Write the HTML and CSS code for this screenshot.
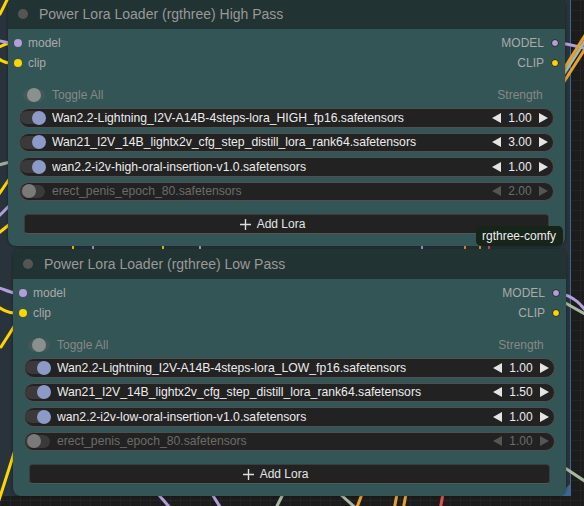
FILE: index.html
```html
<!DOCTYPE html>
<html>
<head>
<meta charset="utf-8">
<link rel="stylesheet" href="styles.css">
</head>
<body>
<div class="canvas">
  <div class="group"></div>
  <svg class="wires" width="584" height="506" viewBox="0 0 584 506">
    <g fill="none" stroke-width="3" stroke-linecap="round">
      <path d="M0 14 L7 0" stroke="#ffd500"/>
      <path d="M-5 50 C 0 46, 4 44, 10 43" stroke="#ffd500"/>
      <path d="M-5 40 L10 43" stroke="#b39ddb"/>
      <path d="M-5 56 C 0 60, 4 63, 10 63" stroke="#ffd500"/>
      <path d="M-5 166 L10 162" stroke="#9fae9c"/>
      <path d="M-5 200 L10 178" stroke="#ffd500"/>
      <path d="M-5 220 L10 205" stroke="#b39ddb"/>
      <path d="M-5 236 L10 224" stroke="#ffd500"/>
      <path d="M-5 287 C 2 288, 8 292, 15 293" stroke="#b39ddb"/>
      <path d="M-5 305 C 3 310, 8 313, 15 313" stroke="#ffd500"/>
      <path d="M1 347 L15 325" stroke="#ffd500"/>
      <path d="M-1 500 L15 450" stroke="#ffd500"/>
      <path d="M558 43 C 570 44, 578 47, 592 50" stroke="#b39ddb"/>
      <path d="M562 72 L592 24" stroke="#e8a030"/>
      <path d="M560 80 L592 30" stroke="#a8b8a0"/>
      <path d="M560 88 L592 38" stroke="#e8a030"/>
      <path d="M558 293 C 574 296, 582 304, 592 320" stroke="#b39ddb"/>
      <path d="M560 300 L592 318" stroke="#a8b8a0"/>
      <path d="M562 466 L592 486" stroke="#a8b8a0"/>
      <path d="M158 494 L172 510" stroke="#b39ddb"/>
      <path d="M212 494 L222 510" stroke="#b39ddb"/>
      <path d="M283 494 L275 510" stroke="#a8b8a0"/>
      <path d="M340 494 L358 510" stroke="#a8b8a0"/>
      <path d="M362 494 L356 510" stroke="#e8a030"/>
      <path d="M397 494 L394 510" stroke="#e8a030"/>
      <path d="M406 494 L403 510" stroke="#e8a030"/>
      <path d="M443 494 L440 510" stroke="#e05050"/>
    </g>
    <g fill="none" stroke-width="2">
      <path d="M73 246 L73 250" stroke="#ffd500"/>
      <path d="M93 246 L93 250" stroke="#b39ddb"/>
      <path d="M163 246 L163 250" stroke="#ffd500"/>
      <path d="M200 246 L200 250" stroke="#a8b8a0"/>
      <path d="M422 246 L422 250" stroke="#b39ddb"/>
      <path d="M465 246 L465 250" stroke="#e8a030"/>
      <path d="M480 246 L480 250" stroke="#e8a030"/>
      <path d="M489 246 L489 250" stroke="#e05050"/>
    </g>
    <polygon points="571,483 571,496 558,496" fill="#3b6790"/>
  </svg>

  <div class="node node-high">
    <div class="node-title"><span class="title-dot"></span><span class="title-text">Power Lora Loader (rgthree) High Pass</span></div>
    <div class="node-body">
      <div class="slot"><span class="slot-in"><i class="dot dot-model"></i>model</span><span class="slot-out">MODEL<i class="dot dot-model"></i></span></div>
      <div class="slot"><span class="slot-in"><i class="dot dot-clip"></i>clip</span><span class="slot-out">CLIP<i class="dot dot-clip"></i></span></div>
      <div class="lora-header"><span class="toggle-all"><i class="knob"></i></span><span class="header-label">Toggle All</span><span class="header-strength">Strength</span></div>
      <div class="lora-list">
        <div class="lora on">
          <span class="toggle"><i class="knob"></i></span>
          <span class="lora-name">Wan2.2-Lightning_I2V-A14B-4steps-lora_HIGH_fp16.safetensors</span>
          <span class="strength"><svg class="arrow" viewBox="0 0 9 10"><polygon points="9,0 9,10 0,5"/></svg><span class="value">1.00</span><svg class="arrow" viewBox="0 0 9 10"><polygon points="0,0 0,10 9,5"/></svg></span>
        </div>
        <div class="lora on">
          <span class="toggle"><i class="knob"></i></span>
          <span class="lora-name">Wan21_I2V_14B_lightx2v_cfg_step_distill_lora_rank64.safetensors</span>
          <span class="strength"><svg class="arrow" viewBox="0 0 9 10"><polygon points="9,0 9,10 0,5"/></svg><span class="value">3.00</span><svg class="arrow" viewBox="0 0 9 10"><polygon points="0,0 0,10 9,5"/></svg></span>
        </div>
        <div class="lora on">
          <span class="toggle"><i class="knob"></i></span>
          <span class="lora-name">wan2.2-i2v-high-oral-insertion-v1.0.safetensors</span>
          <span class="strength"><svg class="arrow" viewBox="0 0 9 10"><polygon points="9,0 9,10 0,5"/></svg><span class="value">1.00</span><svg class="arrow" viewBox="0 0 9 10"><polygon points="0,0 0,10 9,5"/></svg></span>
        </div>
        <div class="lora off">
          <span class="toggle"><i class="knob"></i></span>
          <span class="lora-name">erect_penis_epoch_80.safetensors</span>
          <span class="strength"><svg class="arrow" viewBox="0 0 9 10"><polygon points="9,0 9,10 0,5"/></svg><span class="value">2.00</span><svg class="arrow" viewBox="0 0 9 10"><polygon points="0,0 0,10 9,5"/></svg></span>
        </div>
      </div>
      <div class="add-lora"><svg class="plus" viewBox="0 0 11 11"><path d="M5.5 0 V11 M0 5.5 H11"/></svg>Add Lora</div>
    </div>
  </div>

  <div class="node node-low">
    <div class="node-title"><span class="title-dot"></span><span class="title-text">Power Lora Loader (rgthree) Low Pass</span></div>
    <div class="node-body">
      <div class="slot"><span class="slot-in"><i class="dot dot-model"></i>model</span><span class="slot-out">MODEL<i class="dot dot-model"></i></span></div>
      <div class="slot"><span class="slot-in"><i class="dot dot-clip"></i>clip</span><span class="slot-out">CLIP<i class="dot dot-clip"></i></span></div>
      <div class="lora-header"><span class="toggle-all"><i class="knob"></i></span><span class="header-label">Toggle All</span><span class="header-strength">Strength</span></div>
      <div class="lora-list">
        <div class="lora on">
          <span class="toggle"><i class="knob"></i></span>
          <span class="lora-name">Wan2.2-Lightning_I2V-A14B-4steps-lora_LOW_fp16.safetensors</span>
          <span class="strength"><svg class="arrow" viewBox="0 0 9 10"><polygon points="9,0 9,10 0,5"/></svg><span class="value">1.00</span><svg class="arrow" viewBox="0 0 9 10"><polygon points="0,0 0,10 9,5"/></svg></span>
        </div>
        <div class="lora on">
          <span class="toggle"><i class="knob"></i></span>
          <span class="lora-name">Wan21_I2V_14B_lightx2v_cfg_step_distill_lora_rank64.safetensors</span>
          <span class="strength"><svg class="arrow" viewBox="0 0 9 10"><polygon points="9,0 9,10 0,5"/></svg><span class="value">1.50</span><svg class="arrow" viewBox="0 0 9 10"><polygon points="0,0 0,10 9,5"/></svg></span>
        </div>
        <div class="lora on">
          <span class="toggle"><i class="knob"></i></span>
          <span class="lora-name">wan2.2-i2v-low-oral-insertion-v1.0.safetensors</span>
          <span class="strength"><svg class="arrow" viewBox="0 0 9 10"><polygon points="9,0 9,10 0,5"/></svg><span class="value">1.00</span><svg class="arrow" viewBox="0 0 9 10"><polygon points="0,0 0,10 9,5"/></svg></span>
        </div>
        <div class="lora off">
          <span class="toggle"><i class="knob"></i></span>
          <span class="lora-name">erect_penis_epoch_80.safetensors</span>
          <span class="strength"><svg class="arrow" viewBox="0 0 9 10"><polygon points="9,0 9,10 0,5"/></svg><span class="value">1.00</span><svg class="arrow" viewBox="0 0 9 10"><polygon points="0,0 0,10 9,5"/></svg></span>
        </div>
      </div>
      <div class="add-lora"><svg class="plus" viewBox="0 0 11 11"><path d="M5.5 0 V11 M0 5.5 H11"/></svg>Add Lora</div>
    </div>
  </div>

  <div class="tooltip">rgthree-comfy</div>
</div>
</body>
</html>
```

FILE: styles.css
```css
* { box-sizing: border-box; margin: 0; padding: 0; }

body {
  margin: 0;
  width: 584px;
  height: 506px;
  overflow: hidden;
  background: #1d1d1d;
  font-family: "Liberation Sans", Arial, sans-serif;
}

.canvas {
  position: relative;
  width: 584px;
  height: 506px;
  overflow: hidden;
  background-color: #1c1c1c;
  background-image:
    linear-gradient(#242424 1px, transparent 1px),
    linear-gradient(90deg, #242424 1px, transparent 1px);
  background-size: 10px 10px;
}

.group {
  position: absolute;
  left: -10px;
  top: -10px;
  width: 581px;
  height: 506px;
  background: #28333c;
  border-right: 1.5px solid #3b6790;
}

.wires {
  position: absolute;
  left: 0;
  top: 0;
}

.node {
  position: absolute;
  background: #355;
  border-radius: 8px;
  box-shadow: 0 0 3px rgba(0, 0, 0, 0.45);
  display: flex;
  flex-direction: column;
}

.node-high { left: 8px; top: -1px; width: 557px; height: 247px; }
.node-low { left: 13px; top: 249px; width: 553px; height: 247px; }

.node-title {
  flex: none;
  height: 30px;
  background: #233;
  border-radius: 8px 8px 0 0;
  display: flex;
  align-items: center;
  padding-left: 10px;
}

.title-dot {
  width: 10px;
  height: 10px;
  border-radius: 50%;
  background: #555;
  margin-right: 11px;
}

.title-text {
  color: #999;
  font-size: 14px;
}

.node-body {
  padding-top: 4px;
  display: flex;
  flex-direction: column;
}

.slot {
  height: 20px;
  display: flex;
  justify-content: space-between;
  align-items: center;
  font-size: 12px;
  color: #aaa;
}

.slot-in { display: flex; align-items: center; padding-left: 6px; }
.slot-in .dot { margin-right: 6px; }
.slot-out { display: flex; align-items: center; padding-right: 6px; }
.slot-out .dot { margin-left: 7px; border: 1px solid #1f2b2b; }

.dot {
  display: block;
  width: 8px;
  height: 8px;
  border-radius: 50%;
}

.dot-model { background: #b39ddb; }
.dot-clip { background: #ffd500; }

.lora-header {
  margin: 14px 11px 0;
  height: 16px;
  display: flex;
  align-items: center;
  font-size: 12px;
  color: #888;
}

.toggle-all {
  margin-left: 4px;
  width: 22px;
  height: 13px;
  border-radius: 7px;
  background: #435858;
  display: flex;
  align-items: center;
  justify-content: center;
}

.toggle-all .knob {
  display: block;
  width: 14px;
  height: 14px;
  border-radius: 50%;
  background: #8a8f8f;
}

.header-label { margin-left: 7px; }

.header-strength {
  margin-left: auto;
  margin-right: 6px;
  width: 56px;
  text-align: center;
}

.lora-list {
  margin: 5px 11px 0;
  display: flex;
  flex-direction: column;
  gap: 5px;
}

.lora {
  height: 19.5px;
  border-radius: 10px;
  background: #222;
  border: 1px solid #4f4f4f;
  display: flex;
  align-items: center;
  font-size: 12.2px;
  color: #ececec;
}

.toggle {
  flex: none;
  width: 25px;
  height: 13px;
  border-radius: 7px;
  background: #3a3a3a;
  display: flex;
  align-items: center;
}

.toggle .knob {
  display: block;
  width: 14px;
  height: 14px;
  border-radius: 50%;
}

.lora.on .toggle { justify-content: flex-end; }
.lora.on .knob { background: #8b9ac6; margin-right: -1px; }
.lora.off .knob { background: #7a7a7a; margin-left: 2px; }

.lora-name {
  margin-left: 7px;
  flex: 1;
  white-space: nowrap;
  overflow: hidden;
}

.strength {
  flex: none;
  width: 56px;
  margin-right: 5px;
  display: flex;
  align-items: center;
  justify-content: space-between;
}

.value { font-size: 12px; }

.arrow { width: 9px; height: 10px; fill: #e4e4e4; }

.lora.off .lora-name,
.lora.off .value { color: #6c6c6c; }
.lora.off .arrow { fill: #555; }

.add-lora {
  margin: 13px 16px 0;
  height: 20px;
  border-radius: 4px;
  background: #222;
  border: 1px solid #3c3c3c;
  border-bottom-color: #555;
  display: flex;
  align-items: center;
  justify-content: center;
  padding-right: 28px;
  color: #e4e4e4;
  font-size: 12px;
}

.plus {
  width: 11px;
  height: 11px;
  margin-right: 6px;
  stroke: #ddd;
  stroke-width: 1.4;
  fill: none;
}

.tooltip {
  position: absolute;
  left: 476px;
  top: 226px;
  width: 87px;
  height: 20px;
  border-radius: 5px;
  background: #16241a;
  color: #eee;
  font-size: 12px;
  line-height: 20px;
  padding-left: 6px;
  white-space: nowrap;
}
```
